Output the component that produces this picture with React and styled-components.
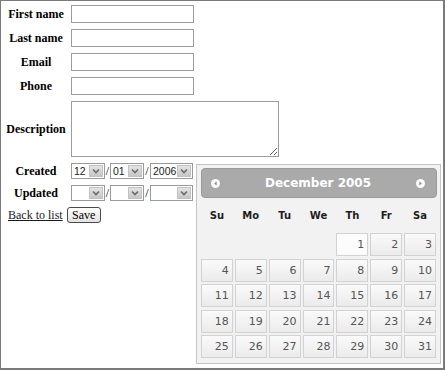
import styled, { createGlobalStyle } from "styled-components";

const GlobalStyle = createGlobalStyle`
  html, body {
    margin: 0;
    padding: 0;
    background: #ffffff;
  }
  * {
    box-sizing: border-box;
  }
`;

const Frame = styled.div`
  position: relative;
  width: 445px;
  height: 370px;
  overflow: hidden;
  background: #ffffff;
  border-style: solid;
  border-color: #7a7a7a;
  border-width: 1px 2px 2px 1px;
  font-family: "Liberation Serif", "Times New Roman", serif;
  font-size: 12px;
  color: #000;
`;

const FormGrid = styled.div`
  display: grid;
  grid-template-columns: 64px auto;
  column-gap: 3px;
  row-gap: 6px;
  padding: 4px 0 0 3px;
  align-items: center;
`;

const Label = styled.div`
  font-weight: bold;
  text-align: center;
  white-space: nowrap;
`;

const Field = styled.div`
  display: flex;
  align-items: center;
`;

const TextInput = styled.input`
  width: 123px;
  height: 18px;
  border: 1px solid #9c9c9c;
  background: #fff;
  margin: 0;
  padding: 0 2px;
`;

const TextArea = styled.textarea`
  width: 208px;
  height: 56px;
  border: 1px solid #9c9c9c;
  background: #fff;
  margin: 0;
  padding: 2px;
  resize: both;
`;

const SelectBox = styled.div`
  display: flex;
  align-items: center;
  justify-content: space-between;
  width: ${(p) => p.$w}px;
  height: 16px;
  border: 1px solid #9a9a9a;
  background: #fff;
  font-family: "Liberation Sans", Arial, sans-serif;
  font-size: 10.5px;
  color: #222;
  padding-left: 2px;
`;

const Arrow = styled.div`
  display: flex;
  align-items: center;
  justify-content: center;
  width: 14px;
  height: 12px;
  margin-right: 1px;
  background: linear-gradient(#e4e4e4, #c6c6c6);
  border: 1px solid #c2c2c2;
`;

const Slash = styled.span`
  width: ${(p) => p.$w}px;
  text-align: center;
  font-size: 12px;
`;

const Actions = styled.div`
  display: flex;
  align-items: center;
  gap: 4px;
  padding: 6px 0 0 7px;
`;

const BackLink = styled.a`
  color: #1a1a1a;
  text-decoration: underline;
  font-size: 12px;
`;

const SaveButton = styled.button`
  height: 16px;
  width: 34px;
  padding: 0;
  font-family: "Liberation Serif", "Times New Roman", serif;
  font-size: 12px;
  line-height: 12px;
  color: #000;
  border: 1px solid #4a4a4a;
  border-radius: 3px;
  background: linear-gradient(#ffffff, #e2e2e2);
`;

const Calendar = styled.div`
  position: absolute;
  left: 195px;
  top: 163px;
  width: 245px;
  height: 200px;
  border: 1px solid #c4c4c4;
  background: #f2f2f2;
  padding: 3px 3px 0 4px;
  font-family: "DejaVu Sans", Verdana, sans-serif;
`;

const CalHeader = styled.div`
  display: flex;
  align-items: center;
  justify-content: space-between;
  height: 30px;
  border: 1px solid #9a9a9a;
  border-radius: 4px;
  background: #aaaaaa;
  padding: 0 11px 0 9px;
`;

const Title = styled.div`
  color: #ffffff;
  font-weight: bold;
  font-size: 12px;
`;

const NavIcon = styled.div`
  width: 9px;
  height: 9px;
  border-radius: 50%;
  background: #fafafa;
  display: flex;
  align-items: center;
  justify-content: center;
`;

const DayNames = styled.div`
  display: grid;
  grid-template-columns: repeat(7, 1fr);
  column-gap: 2px;
  height: 35px;
  align-items: center;
  padding-right: 1px;
`;

const DayName = styled.div`
  text-align: center;
  font-weight: bold;
  font-size: 10px;
  color: #1e1e1e;
`;

const Days = styled.div`
  display: grid;
  grid-template-columns: repeat(7, 1fr);
  grid-auto-rows: 23px;
  column-gap: 2px;
  row-gap: 2.5px;
  padding-right: 1px;
`;

const DayCell = styled.div`
  grid-column-start: ${(p) => p.$start || "auto"};
  display: flex;
  align-items: center;
  justify-content: flex-end;
  padding-right: 3px;
  border: 1px solid #d2d2d2;
  background: ${(p) =>
    p.$light ? "#fcfcfc" : "linear-gradient(#fafafa, #ebebeb)"};
  font-size: 11px;
  color: #555;
`;

function Select({ width, value }) {
  return (
    <SelectBox $w={width}>
      <span>{value}</span>
      <Arrow>
        <svg width="8" height="6" viewBox="0 0 8 6">
          <path d="M1 1.5 L4 4.5 L7 1.5" fill="none" stroke="#6a6a6a" strokeWidth="1.6" />
        </svg>
      </Arrow>
    </SelectBox>
  );
}

function DateSelects({ day, month, year }) {
  return (
    <Field>
      <Select width={34} value={day} />
      <Slash $w={5}>/</Slash>
      <Select width={34} value={month} />
      <Slash $w={6}>/</Slash>
      <Select width={43} value={year} />
    </Field>
  );
}

const dayNames = ["Su", "Mo", "Tu", "We", "Th", "Fr", "Sa"];
const days = Array.from({ length: 31 }, (_, i) => i + 1);

function DatePicker() {
  return (
    <Calendar>
      <CalHeader>
        <NavIcon>
          <svg width="5" height="5" viewBox="0 0 5 5">
            <path d="M3.6 0.6 L1.2 2.5 L3.6 4.4 Z" fill="#888" />
          </svg>
        </NavIcon>
        <Title>December 2005</Title>
        <NavIcon>
          <svg width="5" height="5" viewBox="0 0 5 5">
            <path d="M1.4 0.6 L3.8 2.5 L1.4 4.4 Z" fill="#888" />
          </svg>
        </NavIcon>
      </CalHeader>
      <DayNames>
        {dayNames.map((d) => (
          <DayName key={d}>{d}</DayName>
        ))}
      </DayNames>
      <Days>
        {days.map((d) => (
          <DayCell key={d} $start={d === 1 ? 5 : undefined} $light={d === 1}>
            {d}
          </DayCell>
        ))}
      </Days>
    </Calendar>
  );
}

export default function App() {
  return (
    <>
      <GlobalStyle />
      <Frame>
        <FormGrid>
          <Label>First name</Label>
          <Field>
            <TextInput />
          </Field>
          <Label>Last name</Label>
          <Field>
            <TextInput />
          </Field>
          <Label>Email</Label>
          <Field>
            <TextInput />
          </Field>
          <Label>Phone</Label>
          <Field>
            <TextInput />
          </Field>
          <Label>Description</Label>
          <Field>
            <TextArea />
          </Field>
          <Label>Created</Label>
          <DateSelects day="12" month="01" year="2006" />
          <Label>Updated</Label>
          <DateSelects day="" month="" year="" />
        </FormGrid>
        <Actions>
          <BackLink href="#">Back to list</BackLink>
          <SaveButton>Save</SaveButton>
        </Actions>
        <DatePicker />
      </Frame>
    </>
  );
}
